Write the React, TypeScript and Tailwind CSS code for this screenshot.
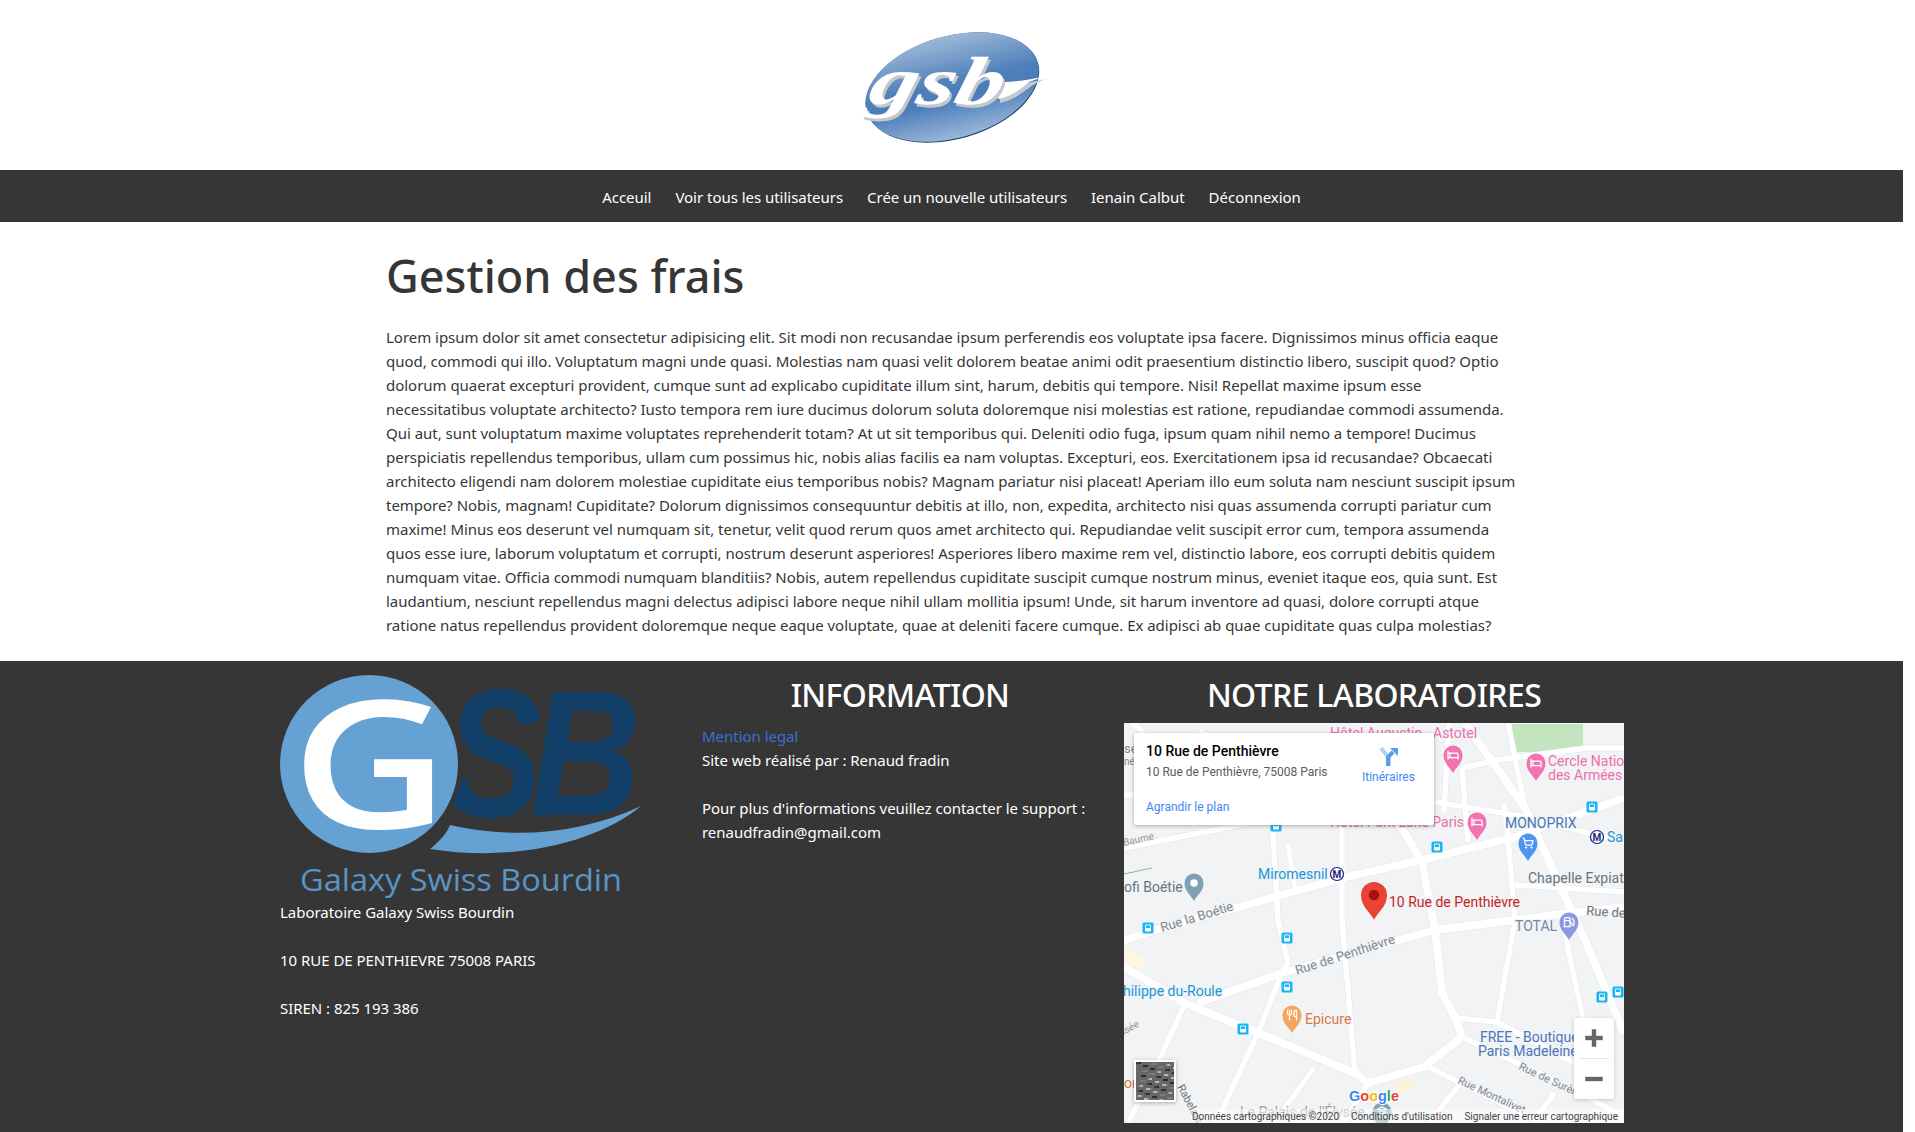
import { Plus, Minus, Bed, ShoppingCart, Utensils, Fuel, Landmark } from 'lucide-react';
import type { LucideIcon } from 'lucide-react';

const lorem = [
    'Lorem ipsum dolor sit amet consectetur adipisicing elit. Sit modi non recusandae ipsum perferendis eos voluptate ipsa facere. Dignissimos minus officia eaque',
    'quod, commodi qui illo. Voluptatum magni unde quasi. Molestias nam quasi velit dolorem beatae animi odit praesentium distinctio libero, suscipit quod? Optio',
    'dolorum quaerat excepturi provident, cumque sunt ad explicabo cupiditate illum sint, harum, debitis qui tempore. Nisi! Repellat maxime ipsum esse',
    'necessitatibus voluptate architecto? Iusto tempora rem iure ducimus dolorum soluta doloremque nisi molestias est ratione, repudiandae commodi assumenda.',
    'Qui aut, sunt voluptatum maxime voluptates reprehenderit totam? At ut sit temporibus qui. Deleniti odio fuga, ipsum quam nihil nemo a tempore! Ducimus',
    'perspiciatis repellendus temporibus, ullam cum possimus hic, nobis alias facilis ea nam voluptas. Excepturi, eos. Exercitationem ipsa id recusandae? Obcaecati',
    'architecto eligendi nam dolorem molestiae cupiditate eius temporibus nobis? Magnam pariatur nisi placeat! Aperiam illo eum soluta nam nesciunt suscipit ipsum',
    'tempore? Nobis, magnam! Cupiditate? Dolorum dignissimos consequuntur debitis at illo, non, expedita, architecto nisi quas assumenda corrupti pariatur cum',
    'maxime! Minus eos deserunt vel numquam sit, tenetur, velit quod rerum quos amet architecto qui. Repudiandae velit suscipit error cum, tempora assumenda',
    'quos esse iure, laborum voluptatum et corrupti, nostrum deserunt asperiores! Asperiores libero maxime rem vel, distinctio labore, eos corrupti debitis quidem',
    'numquam vitae. Officia commodi numquam blanditiis? Nobis, autem repellendus cupiditate suscipit cumque nostrum minus, eveniet itaque eos, quia sunt. Est',
    'laudantium, nesciunt repellendus magni delectus adipisci labore neque nihil ullam mollitia ipsum! Unde, sit harum inventore ad quasi, dolore corrupti atque',
    'ratione natus repellendus provident doloremque neque eaque voluptate, quae at deleniti facere cumque. Ex adipisci ab quae cupiditate quas culpa molestias?',
];

const navLinks = ['Acceuil', 'Voir tous les utilisateurs', 'Crée un nouvelle utilisateurs', 'Ienain Calbut', 'Déconnexion'];

function HeaderLogo() {
    return (
        <svg width="190" height="120" viewBox="0 0 190 120" className="block">
            <defs>
                <linearGradient id="oval" x1="0.55" y1="0" x2="0.45" y2="1">
                    <stop offset="0" stopColor="#9db8d8" />
                    <stop offset="0.45" stopColor="#4f80ba" />
                    <stop offset="0.62" stopColor="#4a7cb8" />
                    <stop offset="1" stopColor="#9ab7da" />
                </linearGradient>
            </defs>
            <ellipse cx="95.5" cy="62.5" rx="89" ry="51.5" transform="rotate(-16 95.5 62.5)" fill="#1d3f70" />
            <ellipse cx="95" cy="62" rx="89" ry="51" transform="rotate(-16 95 62)" fill="url(#oval)" />
            <path d="M143 60 C158 60 172 58 188 54 L176 60 C165 68 155 76 143 78 Z" fill="#c4c8cc" />
            <path d="M143 57 C158 57 170 55 186 52 L172 57 C163 65 153 72 141 74 Z" fill="#fff" />
            <g transform="translate(9 79) skewX(-14)">
                <text x="3" y="3" fontFamily="'Liberation Serif', serif" fontWeight="700" fontStyle="italic" fontSize="68" fill="#c4c8cc" textLength="134" lengthAdjust="spacingAndGlyphs">gsb</text>
                <text x="0" y="0" fontFamily="'Liberation Serif', serif" fontWeight="700" fontStyle="italic" fontSize="68" fill="#fff" textLength="134" lengthAdjust="spacingAndGlyphs">gsb</text>
            </g>
        </svg>
    );
}

function FooterLogo() {
    return (
        <svg width="370" height="225" viewBox="0 0 370 225" className="block">
            <text transform="translate(165 141) scale(0.8 1)" fontFamily="'Liberation Sans', sans-serif" fontWeight="700" fontStyle="italic" fontSize="182" fill="#134069">S</text>
            <text transform="translate(250 140) scale(0.86 1)" fontFamily="'Liberation Sans', sans-serif" fontWeight="700" fontStyle="italic" fontSize="178" fill="#134069">B</text>
            <circle cx="89" cy="89" r="93" fill="#363636" />
            <circle cx="89" cy="89" r="89" fill="#65a1d2" />
            <text transform="translate(90 153) scale(1.22 1)" textAnchor="middle" fontFamily="'Open Sans', sans-serif" fontWeight="600" fontSize="178" fill="#fff">G</text>
            <path d="M150 174 C160 166 167 158 170 150 C230 164 300 160 361 131 C320 165 240 188 150 174 Z" fill="#65a1d2" />
            <text x="20" y="216" fontFamily="'Open Sans', sans-serif" fontSize="31" fill="#5a94c5" textLength="322" lengthAdjust="spacingAndGlyphs">Galaxy Swiss Bourdin</text>
        </svg>
    );
}

function Pin({ x, y, color, r = 9.5, inner = '#fff', icon: Icon }: { x: number; y: number; color: string; r?: number; inner?: string; icon?: LucideIcon }) {
    return (
        <g transform={`translate(${x} ${y})`}>
            <path d={`M0 ${r * 1.9} C${-r * 0.3} ${r * 1.3} ${-r} ${r * 0.9} ${-r} 0 A${r} ${r} 0 1 1 ${r} 0 C${r} ${r * 0.9} ${r * 0.3} ${r * 1.3} 0 ${r * 1.9} Z`} fill={color} />
            {Icon ? <Icon x={-6} y={-6} width={12} height={12} color="#fff" strokeWidth={2.5} /> : <circle r={r * 0.4} fill={inner} />}
        </g>
    );
}

function Bus({ x, y }: { x: number; y: number }) {
    return (
        <g transform={`translate(${x} ${y})`}>
            <rect x="-5.5" y="-5.5" width="11" height="11" rx="1.5" fill="#17b5f5" />
            <rect x="-3" y="-3.5" width="6" height="7" rx="1" fill="#fff" />
            <rect x="-2.2" y="-2.6" width="4.4" height="2.6" fill="#17b5f5" />
        </g>
    );
}

function MapLabel({ x, y, fill, size = 14, rotate, children }: { x: number; y: number; fill: string; size?: number; rotate?: number; children: string }) {
    return (
        <text
            x={x}
            y={y}
            fill={fill}
            fontSize={size}
            transform={rotate ? `rotate(${rotate} ${x} ${y})` : undefined}
            stroke="#f3f4f6"
            strokeWidth="2"
            paintOrder="stroke"
        >
            {children}
        </text>
    );
}

const wideRoads = [
    'M-5 219 L38 205 L151 174 L218 155 L298 137 L391 114 L500 75',
    'M74 280 L158 250 L311 207 L391 197 L438 191 L500 184',
    'M-5 241 L61 280 L134 310 L231 350 L244 360',
    'M244 360 L300 344 L338 314 L331 294 L318 270 L311 207 L298 139 L278 105 L264 95',
    'M341 0 L401 85 L448 189 L458 210 L500 310',
];
const thinRoads = [
    'M218 95 L218 197 L231 350',
    'M148 95 L154 197 L164 240 L158 250 L134 310 L98 387 L88 400',
    'M61 280 L34 340 L4 400',
    'M338 314 L451 367 L500 394',
    'M304 344 L391 387 L420 400',
    'M334 295 L373 299 L391 197 L384 115 L380 80',
    'M373 299 L460 345',
    'M311 79 L391 92 L500 119',
    'M384 0 L401 85',
    'M338 45 L374 37 L464 25 L500 25',
    'M338 45 L344 119',
    'M391 162 L500 169',
    'M0 125 L151 95',
    'M0 72 L12 72',
    'M8 0 L20 10',
    'M320 90 L325 0',
    'M244 360 L220 400',
    'M190 345 L150 400',
    'M335 362 L305 400',
    'M430 370 L410 400',
    'M438 191 L445 230 L460 300',
    'M75 8 L120 30',
];

const satelliteCells = Array.from({ length: 90 }, (_, i) => ({
    x: (i * 17) % 38,
    y: (i * 29) % 38,
    w: 2 + (i % 5),
    c: ['#9a9a9a', '#3a3a3a', '#b8b8b8', '#2c2c2c', '#7a7a7a'][i % 5],
}));

function GoogleMap() {
    return (
        <div className="relative w-[500px] h-[400px] overflow-hidden bg-[#f2f3f5]" style={{ fontFamily: 'Roboto, sans-serif' }}>
            <svg width="500" height="400" viewBox="0 0 500 400" className="block" fontFamily="Roboto, sans-serif">
                <rect x="388" y="1" width="71" height="28" fill="#c4e4c0" />
                <path d="M0 222 L22 238 L14 246 L0 250 Z" fill="#fff6e0" />
                <path d="M270 360 L292 355 L288 367 L274 369 Z" fill="#fdf3d6" />
                <path d="M0 151 L28 145" stroke="#7fbf87" strokeWidth="1" fill="none" />
                <g fill="none" stroke="#e3e5e8" strokeLinejoin="round">
                    {wideRoads.map((d) => <path key={d} d={d} strokeWidth="9" />)}
                    {thinRoads.map((d) => <path key={d} d={d} strokeWidth="6.5" />)}
                </g>
                <g fill="none" stroke="#fff" strokeLinejoin="round">
                    <path d="M164 122 L171 165" strokeWidth="4" />
                    {wideRoads.map((d) => <path key={d} d={d} strokeWidth="8" />)}
                    {thinRoads.map((d) => <path key={d} d={d} strokeWidth="5.5" />)}
                </g>

                <MapLabel x={0} y={30} fill="#80868b" size={13}>sé</MapLabel>
                <MapLabel x={0} y={42} fill="#80868b" size={10}>né</MapLabel>
                <MapLabel x={206} y={15} fill="#ec6fae">Hôtel Augustin</MapLabel>
                <MapLabel x={309} y={15} fill="#ec6fae">Astotel</MapLabel>
                <MapLabel x={424} y={43} fill="#ec6fae">Cercle Nation</MapLabel>
                <MapLabel x={424} y={57} fill="#ec6fae">des Armées</MapLabel>
                <MapLabel x={206} y={104} fill="#ec6fae">Hôtel Park Lane Paris</MapLabel>
                <MapLabel x={381} y={105} fill="#4a76b8">MONOPRIX</MapLabel>
                <MapLabel x={483} y={119} fill="#1a95d6">Saint</MapLabel>
                <MapLabel x={134} y={156} fill="#1a95d6">Miromesnil</MapLabel>
                <MapLabel x={404} y={160} fill="#66757f">Chapelle Expiatoire</MapLabel>
                <MapLabel x={0} y={169} fill="#66757f">ofi Boétie</MapLabel>
                <MapLabel x={265} y={184} fill="#c5221f">10 Rue de Penthièvre</MapLabel>
                <MapLabel x={462} y={192} fill="#66757f" size={13} rotate={4}>Rue de</MapLabel>
                <MapLabel x={391} y={208} fill="#7986a8">TOTAL</MapLabel>
                <MapLabel x={38} y={209} fill="#7f8a92" size={13} rotate={-17}>Rue la Boétie</MapLabel>
                <MapLabel x={173} y={252} fill="#7f8a92" size={13} rotate={-18}>Rue de Penthièvre</MapLabel>
                <MapLabel x={-1} y={273} fill="#1a95d6">hilippe du-Roule</MapLabel>
                <MapLabel x={181} y={301} fill="#d9774a">Epicure</MapLabel>
                <MapLabel x={356} y={319} fill="#4a76b8">FREE - Boutique</MapLabel>
                <MapLabel x={354} y={333} fill="#4a76b8">Paris Madeleine</MapLabel>
                <MapLabel x={394} y={346} fill="#7f8a92" size={11} rotate={25}>Rue de Surène</MapLabel>
                <MapLabel x={333} y={360} fill="#7f8a92" size={11} rotate={25}>Rue Montalivet</MapLabel>
                <MapLabel x={53} y={364} fill="#6b7480" size={11} rotate={62}>Rabelais</MapLabel>
                <MapLabel x={0} y={123} fill="#8f969c" size={10} rotate={-13}>Baume</MapLabel>
                <MapLabel x={0} y={312} fill="#8f969c" size={10} rotate={-30}>isée</MapLabel>
                <MapLabel x={116} y={394} fill="#9aa0a6">Le Palais de l'Élysée</MapLabel>
                <MapLabel x={0} y={365} fill="#d9774a">on</MapLabel>

                <Pin x={329} y={32} color="#f173b1" icon={Bed} />
                <Pin x={353} y={99} color="#f173b1" icon={Bed} />
                <Pin x={412} y={40} color="#f173b1" icon={Bed} />
                <Pin x={404} y={120} color="#4e95ef" icon={ShoppingCart} />
                <Pin x={70} y={160} color="#7ea1b3" />
                <Pin x={445} y={199} color="#8c98e0" icon={Fuel} />
                <Pin x={168} y={292} color="#f6a45e" icon={Utensils} />
                <Pin x={258} y={389} color="#7ea1b3" icon={Landmark} />
                <Pin x={250} y={172} color="#ea4335" r={13} inner="#a60f0f" />

                <g fontWeight="700" textAnchor="middle">
                    <circle cx="213" cy="151" r="6.5" fill="#fff" stroke="#1a237e" strokeWidth="1.2" />
                    <text x="213" y="154.5" fontSize="10" fill="#1a237e">M</text>
                    <circle cx="473" cy="114" r="6.5" fill="#fff" stroke="#1a237e" strokeWidth="1.2" />
                    <text x="473" y="117.5" fontSize="10" fill="#1a237e">M</text>
                </g>

                <Bus x={152} y={103} />
                <Bus x={313} y={124} />
                <Bus x={468} y={84} />
                <Bus x={24} y={205} />
                <Bus x={163} y={215} />
                <Bus x={163} y={264} />
                <Bus x={119} y={306} />
                <Bus x={478} y={274} />
                <Bus x={494} y={269} />

                <text x="225" y="378" fontSize="14.5" fontWeight="700" fontFamily="'Liberation Sans', sans-serif" stroke="#fff" strokeWidth="2" paintOrder="stroke">
                    <tspan fill="#4285f4">G</tspan>
                    <tspan fill="#ea4335">o</tspan>
                    <tspan fill="#fbbc05">o</tspan>
                    <tspan fill="#4285f4">g</tspan>
                    <tspan fill="#34a853">l</tspan>
                    <tspan fill="#ea4335">e</tspan>
                </text>
            </svg>

            {/* info card */}
            <div className="absolute left-[10px] top-[10px] w-[300px] h-[92px] bg-white rounded-[2px] shadow-[0_1px_4px_rgba(0,0,0,0.3)]">
                <div className="absolute left-[12px] top-[9px] text-[14px] leading-[18px] font-medium text-black">10 Rue de Penthièvre</div>
                <div className="absolute left-[12px] top-[31px] text-[12px] leading-[16px] text-[#5b5b5b]">10 Rue de Penthièvre, 75008 Paris</div>
                <div className="absolute left-[12px] top-[66px] text-[12px] leading-[16px] text-[#4285f4]">Agrandir le plan</div>
                <svg className="absolute left-[245px] top-[14px]" width="20" height="20" viewBox="0 0 20 20">
                    <path d="M2 1 L10 11 L10 19" stroke="#b3d0f7" strokeWidth="4" fill="none" />
                    <path d="M9 19 L9 10 L14 5" stroke="#5b9bf0" strokeWidth="4" fill="none" />
                    <path d="M11 1 L19 1 L19 9 Z" fill="#5b9bf0" />
                </svg>
                <div className="absolute left-[228px] top-[36px] text-[12px] leading-[16px] text-[#4285f4]">Itinéraires</div>
            </div>

            {/* satellite thumb */}
            <div className="absolute left-[10px] top-[337px] w-[42px] h-[42px] bg-[#666] border-2 border-white shadow-[0_1px_4px_rgba(0,0,0,0.3)]">
                <svg width="38" height="38" viewBox="0 0 38 38" className="block">
                    {satelliteCells.map((c, i) => <rect key={i} x={c.x} y={c.y} width={c.w} height="2" fill={c.c} />)}
                </svg>
            </div>

            {/* zoom control */}
            <div className="absolute left-[450px] top-[295px] w-[40px] h-[81px] bg-white rounded-[2px] shadow-[0_1px_4px_rgba(0,0,0,0.2)] flex flex-col items-center">
                <div className="h-[40px] flex items-center justify-center"><Plus size={30} strokeWidth={3.5} color="#666" strokeLinecap="butt" /></div>
                <div className="w-[30px] h-px bg-[#e6e6e6]" />
                <div className="h-[40px] flex items-center justify-center"><Minus size={30} strokeWidth={3.5} color="#666" strokeLinecap="butt" /></div>
            </div>

            {/* attribution */}
            <div className="absolute left-[67px] right-0 bottom-0 h-[14px] flex gap-[12px] px-[1px] bg-white/50 text-[10px] leading-[15px] text-[#444] whitespace-nowrap">
                <span>Données cartographiques ©2020</span>
                <span>Conditions d'utilisation</span>
                <span>Signaler une erreur cartographique</span>
            </div>
        </div>
    );
}

export default function App() {
    return (
        <div className="w-[1903px] bg-white text-[15px] leading-[24px] tracking-[-0.002em]" style={{ fontFamily: "'Noto Sans', sans-serif" }}>
            <header className="h-[170px] flex items-center justify-center">
                <HeaderLogo />
            </header>

            <nav className="h-[52px] bg-[#363636] flex items-center justify-center gap-[24px] text-white pt-[1px]">
                {navLinks.map((l) => <a key={l} href="#">{l}</a>)}
            </nav>

            <main className="w-[1131px] ml-[386px] pt-[30px] h-[439px] text-[#363636]">
                <h1 className="text-[45px] leading-[48px] font-medium mb-[25px] tracking-normal">Gestion des frais</h1>
                <p className="whitespace-nowrap">
                    {lorem.map((l) => <span key={l} className="block">{l}</span>)}
                </p>
            </main>

            <footer className="h-[471px] bg-[#363636] text-white flex pl-[280px]">
                <div className="w-[422px] pt-[14px]">
                    <FooterLogo />
                    <p>Laboratoire Galaxy Swiss Bourdin</p>
                    <p className="mt-[24px]">10 RUE DE PENTHIEVRE 75008 PARIS</p>
                    <p className="mt-[24px]">SIREN : 825 193 386</p>
                </div>
                <div className="w-[396px] mr-[26px] pt-[15px]">
                    <h2 className="text-[32px] leading-[38px] font-medium text-center mb-[10px] tracking-[-0.02em]">INFORMATION</h2>
                    <a href="#" className="block text-[#3b6fd4]">Mention legal</a>
                    <p>Site web réalisé par : Renaud fradin</p>
                    <p className="mt-[24px]">Pour plus d'informations veuillez contacter le support :</p>
                    <p>renaudfradin@gmail.com</p>
                </div>
                <div className="w-[500px] pt-[15px] tracking-normal">
                    <h2 className="text-[32px] leading-[38px] font-medium text-center mb-[9px] tracking-[-0.02em]">NOTRE LABORATOIRES</h2>
                    <GoogleMap />
                </div>
            </footer>
        </div>
    );
}
